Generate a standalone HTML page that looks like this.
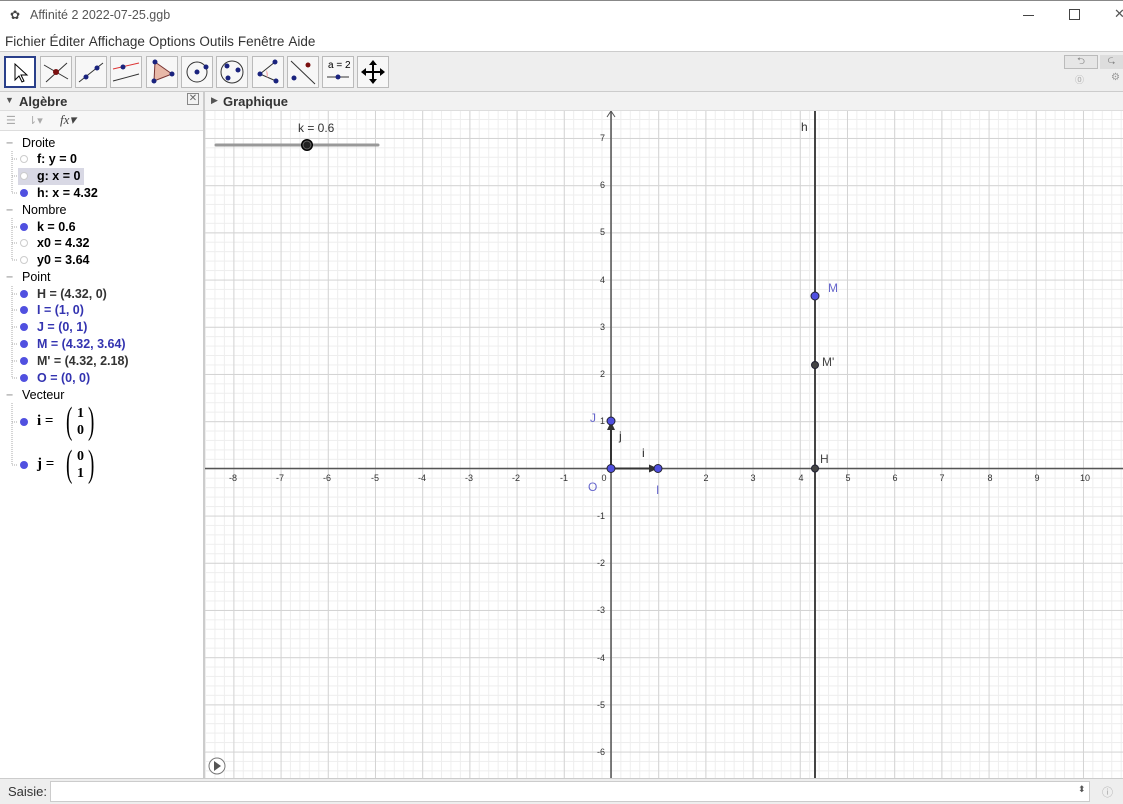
<!DOCTYPE html>
<html><head><meta charset="utf-8"><style>
*{margin:0;padding:0;box-sizing:border-box}
body{width:1123px;height:804px;overflow:hidden;background:#fff;font-family:"Liberation Sans",sans-serif;font-size:13px;color:#000;position:relative}
.a{position:absolute}
.menu span{margin-right:4px}
.tb{position:absolute;top:56px;width:32px;height:32px;border:1px solid #bbb;background:#f7f7f7}
.row{position:absolute;left:0;height:17px;font-size:12.5px;line-height:17px;white-space:nowrap}
.dot{position:absolute;left:20px;width:8px;height:8px;border-radius:50%;background:#5050e0}
.od{position:absolute;left:20px;width:8px;height:8px;border-radius:50%;border:1px solid #ccc;background:#fff}
.b{font-weight:bold}
</style></head><body>
<div class="a" style="left:0;top:0;width:1123px;height:31px;background:#fff;border-top:1px solid #888"></div>
<div class="a" style="left:10px;top:8px;font-size:12px;color:#444">✿</div>
<div class="a" style="left:30px;top:8px;font-size:12.5px;color:#555">Affinité 2 2022-07-25.ggb</div>
<div class="a" style="left:1023px;top:15px;width:11px;height:1px;background:#444"></div>
<div class="a" style="left:1069px;top:9px;width:11px;height:11px;border:1px solid #444"></div>
<div class="a" style="left:1114px;top:6px;font-size:13px;color:#555">✕</div>
<div class="a menu" style="left:5px;top:34px;font-size:13.5px;color:#333"><span>Fichier</span><span>Éditer</span><span>Affichage</span><span>Options</span><span>Outils</span><span>Fenêtre</span><span>Aide</span></div>
<div class="a" style="left:0;top:51px;width:1123px;height:41px;background:#eee;border-top:1px solid #ccc;border-bottom:1px solid #ccc"></div>
<div class="tb" style="left:4px;border:2px solid #2a3f8a;background:#fff"><svg width="28" height="28"><path d="M9 6 L9 22 L13 18 L16 24 L18 23 L15 17 L21 17 Z" fill="#fff" stroke="#000"/></svg></div>
<div class="tb" style="left:40px"><svg width="30" height="30"><path d="M3 8 L27 22 M5 25 L26 6" stroke="#333"/><circle cx="15" cy="15" r="3" fill="#7a1010"/></svg></div>
<div class="tb" style="left:75px"><svg width="30" height="30"><path d="M3 25 L27 6" stroke="#333"/><circle cx="10" cy="20" r="2.5" fill="#1a237e"/><circle cx="21" cy="11" r="2.5" fill="#1a237e"/></svg></div>
<div class="tb" style="left:110px"><svg width="30" height="30"><path d="M2 12 L28 6" stroke="#d33"/><path d="M2 24 L28 17" stroke="#333"/><circle cx="12" cy="10" r="2.5" fill="#1a237e"/></svg></div>
<div class="tb" style="left:146px"><svg width="30" height="30"><path d="M8 5 L25 17 L7 24 Z" fill="#e8b8a8" stroke="#733"/><circle cx="8" cy="5" r="2.5" fill="#1a237e"/><circle cx="25" cy="17" r="2.5" fill="#1a237e"/><circle cx="7" cy="24" r="2.5" fill="#1a237e"/></svg></div>
<div class="tb" style="left:181px"><svg width="30" height="30"><circle cx="15" cy="15" r="10" fill="none" stroke="#333"/><circle cx="15" cy="15" r="2.5" fill="#1a237e"/><circle cx="24" cy="10" r="2.5" fill="#1a237e"/></svg></div>
<div class="tb" style="left:216px"><svg width="30" height="30"><circle cx="15" cy="15" r="11" fill="none" stroke="#333"/><circle cx="10" cy="9" r="2.5" fill="#1a237e"/><circle cx="21" cy="13" r="2.5" fill="#1a237e"/><circle cx="11" cy="21" r="2.5" fill="#1a237e"/></svg></div>
<div class="tb" style="left:252px"><svg width="30" height="30"><path d="M22 5 L7 17 L23 24" fill="none" stroke="#333"/><path d="M13 13 A6 6 0 0 1 14 21 Z" fill="#f5b5b5"/><circle cx="22" cy="5" r="2.5" fill="#1a237e"/><circle cx="7" cy="17" r="2.5" fill="#1a237e"/><circle cx="23" cy="24" r="2.5" fill="#1a237e"/></svg></div>
<div class="tb" style="left:287px"><svg width="30" height="30"><path d="M3 4 L27 27" stroke="#333"/><circle cx="20" cy="8" r="2.5" fill="#7a1010"/><circle cx="6" cy="21" r="2.5" fill="#1a237e"/></svg></div>
<div class="tb" style="left:322px"><div class="a" style="left:5px;top:3px;font-size:10px">a = 2</div><svg width="30" height="30"><path d="M4 20 L26 20" stroke="#333"/><circle cx="15" cy="20" r="2.5" fill="#1a237e"/></svg></div>
<div class="tb" style="left:357px"><svg width="30" height="30"><path d="M15 5 L15 25 M5 15 L25 15" stroke="#000" stroke-width="2"/><path d="M15 3 L11 8 L19 8Z M15 27 L11 22 L19 22Z M3 15 L8 11 L8 19Z M27 15 L22 11 L22 19Z" fill="#000"/></svg></div>
<div class="a" style="left:1064px;top:55px;width:34px;height:14px;border:1px solid #bbb;background:#e6e6e6;font-size:10px;text-align:center;color:#888;line-height:12px">⮌</div>
<div class="a" style="left:1100px;top:55px;width:23px;height:14px;background:#ddd;font-size:10px;text-align:center;color:#888;line-height:12px">⮎</div>
<div class="a" style="left:1075px;top:73px;font-size:9px;color:#aaa">⓪</div>
<div class="a" style="left:1111px;top:72px;font-size:10px;color:#999">⚙</div>
<div class="a" style="left:0;top:92px;width:1123px;height:19px;background:#f2f2f2;border-bottom:1px solid #ddd"></div>
<div class="a" style="left:5px;top:95px;font-size:9px;color:#555">▼</div>
<div class="a b" style="left:19px;top:94px;font-size:13px;color:#333">Algèbre</div>
<div class="a" style="left:187px;top:93px;width:12px;height:12px;border:1px solid #888;font-size:10px;line-height:10px;text-align:center;color:#666">✕</div>
<div class="a" style="left:211px;top:95px;font-size:9px;color:#555">▶</div>
<div class="a b" style="left:223px;top:94px;font-size:13px;color:#333">Graphique</div>
<div class="a" style="left:0;top:111px;width:203px;height:20px;background:#f7f7f7;border-bottom:1px solid #ddd"></div>
<div class="a" style="left:6px;top:114px;font-size:11px;color:#aaa">☰</div>
<div class="a" style="left:28px;top:114px;font-size:11px;color:#aaa">⇂▾</div>
<div class="a" style="left:60px;top:112px;font-size:13px;font-style:italic;font-family:'Liberation Serif',serif;color:#444">fx▾</div>
<div class="a" style="left:203px;top:92px;width:2px;height:687px;background:#ccc"></div>
<div class="row" style="top:135px;left:6px;color:#888">−</div><div class="row" style="top:135px;left:22px">Droite</div>
<div class="od" style="top:155px"></div><div class="row b" style="top:151px;left:37px">f: y = 0</div>
<div class="a" style="left:18px;top:168px;width:66px;height:17px;background:#d8d8e4"></div>
<div class="od" style="top:172px"></div><div class="row b" style="top:168px;left:37px">g: x = 0</div>
<div class="dot" style="top:189px"></div><div class="row b" style="top:185px;left:37px">h: x = 4.32</div>
<div class="row" style="top:202px;left:6px;color:#888">−</div><div class="row" style="top:202px;left:22px">Nombre</div>
<div class="dot" style="top:223px"></div><div class="row b" style="top:219px;left:37px">k = 0.6</div>
<div class="od" style="top:239px"></div><div class="row b" style="top:235px;left:37px">x0 = 4.32</div>
<div class="od" style="top:256px"></div><div class="row b" style="top:252px;left:37px">y0 = 3.64</div>
<div class="row" style="top:269px;left:6px;color:#888">−</div><div class="row" style="top:269px;left:22px">Point</div>
<div class="dot" style="top:290px"></div><div class="row b" style="top:286px;left:37px;color:#333">H = (4.32, 0)</div>
<div class="dot" style="top:306px"></div><div class="row b" style="top:302px;left:37px;color:#3333b0">I = (1, 0)</div>
<div class="dot" style="top:323px"></div><div class="row b" style="top:319px;left:37px;color:#3333b0">J = (0, 1)</div>
<div class="dot" style="top:340px"></div><div class="row b" style="top:336px;left:37px;color:#3333b0">M = (4.32, 3.64)</div>
<div class="dot" style="top:357px"></div><div class="row b" style="top:353px;left:37px;color:#333">M' = (4.32, 2.18)</div>
<div class="dot" style="top:374px"></div><div class="row b" style="top:370px;left:37px;color:#3333b0">O = (0, 0)</div>
<div class="row" style="top:387px;left:6px;color:#888">−</div><div class="row" style="top:387px;left:22px">Vecteur</div>
<div class="dot" style="top:418px"></div><div class="a b" style="left:37px;top:413px;font-family:'Liberation Serif',serif;font-size:15px">i =</div>
<div class="a" style="left:66px;top:402px;font-family:'Liberation Serif',serif;font-size:38px;line-height:38px;transform:scaleX(.5);transform-origin:left">(</div>
<div class="a b" style="left:77px;top:405px;font-family:'Liberation Serif',serif;font-size:14px;line-height:17px">1<br>0</div>
<div class="a" style="left:88px;top:402px;font-family:'Liberation Serif',serif;font-size:38px;line-height:38px;transform:scaleX(.5);transform-origin:left">)</div>
<div class="dot" style="top:461px"></div><div class="a b" style="left:37px;top:456px;font-family:'Liberation Serif',serif;font-size:15px">j =</div>
<div class="a" style="left:66px;top:445px;font-family:'Liberation Serif',serif;font-size:38px;line-height:38px;transform:scaleX(.5);transform-origin:left">(</div>
<div class="a b" style="left:77px;top:448px;font-family:'Liberation Serif',serif;font-size:14px;line-height:17px">0<br>1</div>
<div class="a" style="left:88px;top:445px;font-family:'Liberation Serif',serif;font-size:38px;line-height:38px;transform:scaleX(.5);transform-origin:left">)</div>
<svg class="a" style="left:0;top:0" width="40" height="480"><path d="M12 151V193H18 M12 159H18 M12 176H18 M12 218V260H18 M12 227H18 M12 243H18 M12 286V378H18 M12 294H18 M12 310H18 M12 327H18 M12 344H18 M12 361H18 M12 403V465H18 M12 422H18" stroke="#aaa" stroke-dasharray="1 1" fill="none"/></svg>
<svg class="a" style="left:205px;top:111px" width="918" height="667">
<defs>
<pattern id="mn" x="0" y="8" width="9.44" height="9.44" patternUnits="userSpaceOnUse"><path d="M0.5 0V9.44M0 0.5H9.44" stroke="#eeeeee" stroke-width="1" fill="none"/></pattern>
<pattern id="mj" x="28.4" y="27" width="47.2" height="47.2" patternUnits="userSpaceOnUse"><path d="M0.5 0V47.2M0 0.5H47.2" stroke="#d4d4d4" stroke-width="1" fill="none"/></pattern>
</defs>
<rect width="918" height="667" fill="url(#mn)"/>
<rect width="918" height="667" fill="url(#mj)"/>
<path d="M406 0V667 M0 357.5H918" stroke="#555" stroke-width="1.5"/>
<path d="M402 6L406 0L410 6" stroke="#555" fill="none"/>
<path d="M610 0V667" stroke="#444" stroke-width="2"/>
<g font-size="9" fill="#333" font-family="Liberation Sans" text-anchor="middle">
<text x="28" y="370">-8</text><text x="75" y="370">-7</text><text x="122" y="370">-6</text><text x="170" y="370">-5</text><text x="217" y="370">-4</text><text x="264" y="370">-3</text><text x="311" y="370">-2</text><text x="359" y="370">-1</text><text x="399" y="370">0</text>
<text x="501" y="370">2</text><text x="548" y="370">3</text><text x="596" y="370">4</text><text x="643" y="370">5</text><text x="690" y="370">6</text><text x="737" y="370">7</text><text x="785" y="370">8</text><text x="832" y="370">9</text><text x="880" y="370">10</text>
<g text-anchor="end"><text x="400" y="30">7</text><text x="400" y="77">6</text><text x="400" y="124">5</text><text x="400" y="172">4</text><text x="400" y="219">3</text><text x="400" y="266">2</text><text x="400" y="313">1</text>
<text x="400" y="408">-1</text><text x="400" y="455">-2</text><text x="400" y="502">-3</text><text x="400" y="550">-4</text><text x="400" y="597">-5</text><text x="400" y="644">-6</text></g>
</g>
<path d="M406 357.5H446 M406 357.5V318" stroke="#333" stroke-width="2"/>
<path d="M453 357.5L444 353.5L444 361.5Z M406 310.5L402 319L410 319Z" fill="#333"/>
<g font-family="Liberation Sans" font-size="12">
<text x="414" y="329" fill="#222">j</text><text x="437" y="346" fill="#222">i</text>
<text x="385" y="311" fill="#6666cc">J</text><text x="383" y="380" fill="#6666cc">O</text><text x="451" y="383" fill="#6666cc">I</text>
<text x="623" y="181" fill="#6666cc">M</text><text x="617" y="255" fill="#444">M'</text><text x="615" y="352" fill="#444">H</text>
<text x="596" y="20" fill="#333">h</text>
<text x="93" y="21" fill="#333">k = 0.6</text>
</g>
<path d="M11 34H173" stroke="#999" stroke-width="3" stroke-linecap="round"/>
<circle cx="102" cy="34" r="6" fill="#000"/><circle cx="102" cy="34" r="4" fill="#222" stroke="#666"/>
<g stroke="#223" stroke-width="1"><circle cx="406" cy="357.5" r="4" fill="#5050e0"/><circle cx="453" cy="357.5" r="4" fill="#5050e0"/><circle cx="406" cy="310" r="4" fill="#5050e0"/><circle cx="610" cy="185" r="4" fill="#5050e0"/><circle cx="610" cy="254" r="3.5" fill="#444"/><circle cx="610" cy="357.5" r="3.5" fill="#444"/></g>
<circle cx="12" cy="655" r="8" fill="#fff" stroke="#777"/><path d="M9 650L16 655L9 660Z" fill="#555"/>
</svg>
<div class="a" style="left:0;top:778px;width:1123px;height:26px;background:#eee;border-top:1px solid #ccc"></div>
<div class="a" style="left:8px;top:784px;font-size:13px;color:#333">Saisie:</div>
<div class="a" style="left:50px;top:781px;width:1040px;height:21px;background:#fff;border:1px solid #ccc"></div>
<div class="a" style="left:1078px;top:784px;font-size:9px;color:#555">⬍</div>
<div class="a" style="left:1102px;top:784px;font-size:11px;color:#aaa">ⓘ</div>
</body></html>
